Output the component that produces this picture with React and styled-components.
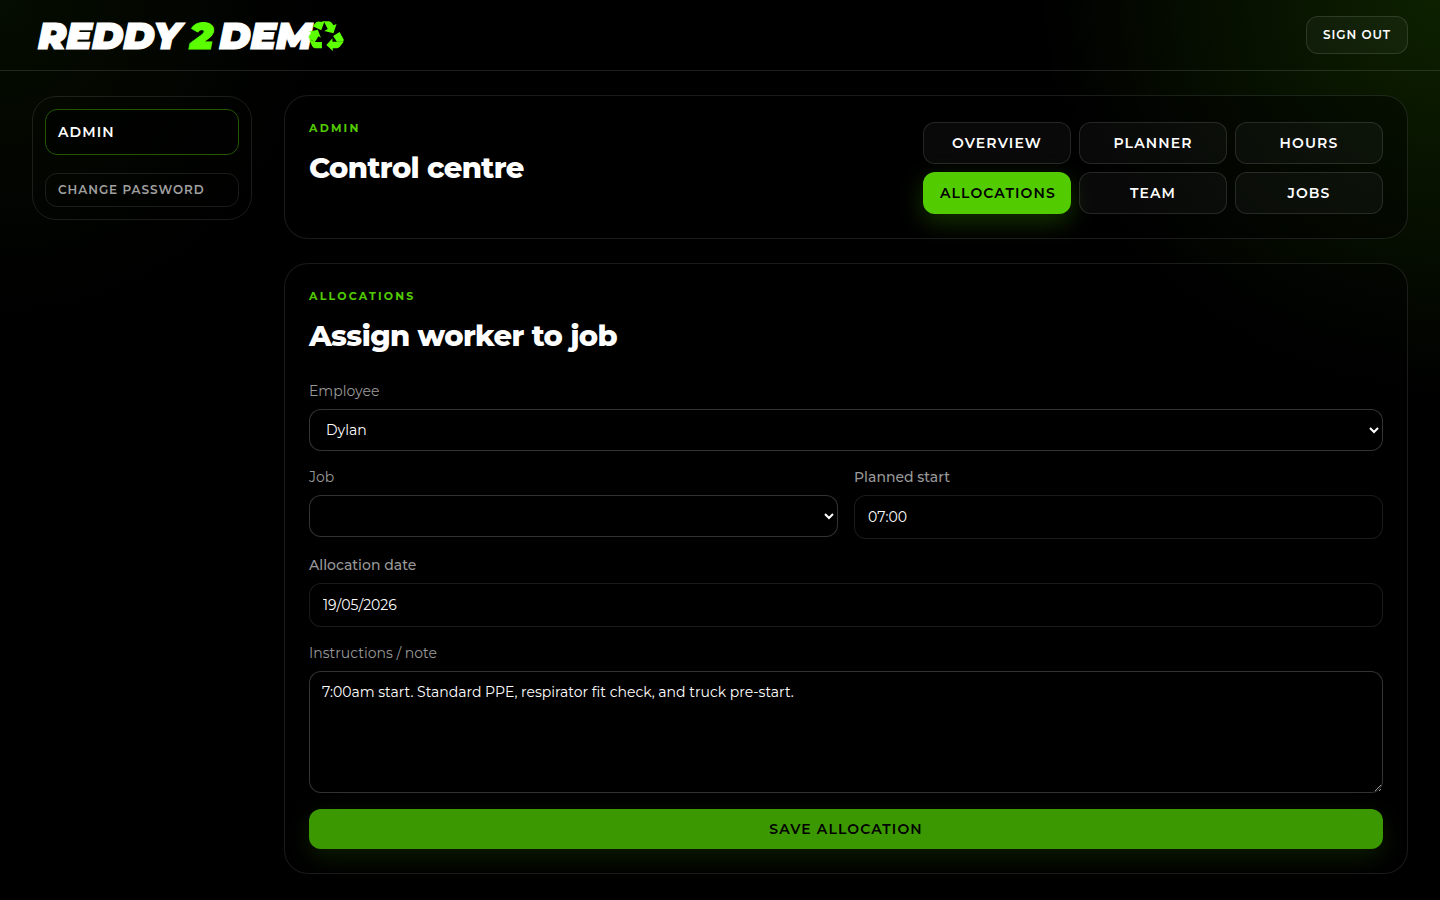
import React, { useState } from "react";
import styled, { createGlobalStyle } from "styled-components";

const GlobalStyle = createGlobalStyle`
  *, *::before, *::after { box-sizing: border-box; }
  body {
    margin: 0;
    min-height: 100vh;
    color: #fff;
    color-scheme: dark;
    font-family: Montserrat, Inter, "Liberation Sans", sans-serif;
    font-size: 14px;
    background:
      radial-gradient(circle at 100% 0, rgba(82, 204, 0, 0.16), transparent 400px),
      radial-gradient(circle at 0 0, rgba(82, 204, 0, 0.06), transparent 320px),
      #000;
  }
  button, input, select, textarea { font: inherit; color: inherit; }
  button { cursor: pointer; }
`;

const Header = styled.header`
  display: flex;
  align-items: center;
  justify-content: space-between;
  height: 71px;
  padding: 0 32px;
  border-bottom: 1px solid rgba(255, 255, 255, 0.12);
`;

const Logo = styled.a`
  display: flex;
  align-items: center;
  padding: 2px 0 0 6px;
  color: #fff;
  text-decoration: none;
  font-size: 38px;
  font-weight: 900;
  font-style: italic;
  line-height: 40px;
  -webkit-text-stroke: 1px currentColor;
`;

const LogoAccent = styled.span`
  margin: 0 6px 0 9px;
  color: #5bff00;
`;

const LogoIcon = styled.svg`
  width: 36px;
  height: 30px;
  margin-left: -4px;
  fill: #5bff00;
`;

const Button = styled.button`
  height: ${(p) => p.$height || 42}px;
  padding: 0 16px;
  border: 1px solid ${(p) => (p.$primary ? "transparent" : "rgba(255, 255, 255, 0.12)")};
  border-radius: 12px;
  background: ${(p) => (p.$primary ? "#52cc00" : "rgba(255, 255, 255, 0.035)")};
  box-shadow: ${(p) => (p.$primary ? "0 8px 24px rgba(82, 204, 0, 0.25)" : "none")};
  color: ${(p) => (p.$primary ? "#000" : "#fff")};
  font-size: ${(p) => (p.$small ? 12 : 14)}px;
  font-weight: 600;
  letter-spacing: 0.08em;
  line-height: ${(p) => (p.$small ? 16 : 20)}px;
  text-transform: uppercase;
`;

const SaveButton = styled.button`
  height: 40px;
  border: 0;
  border-radius: 12px;
  background: #3c9800;
  box-shadow: 0 8px 24px rgba(82, 204, 0, 0.14);
  color: #000;
  font-weight: 600;
  letter-spacing: 0.08em;
  text-transform: uppercase;
`;

const Layout = styled.div`
  display: grid;
  grid-template-columns: 220px minmax(0, 1fr);
  align-items: start;
  gap: 32px;
  padding: 24px 32px;
`;

const Sidebar = styled.nav`
  position: sticky;
  top: 96px;
  display: flex;
  flex-direction: column;
  gap: 18px;
  padding: 12px;
  border: 1px solid rgba(255, 255, 255, 0.1);
  border-radius: 24px;
`;

const SideLink = styled.a`
  display: flex;
  align-items: center;
  height: ${(p) => (p.$active ? 46 : 34)}px;
  padding: 0 12px;
  border: 1px solid ${(p) => (p.$active ? "#235700" : "rgba(255, 255, 255, 0.1)")};
  border-radius: 12px;
  background: ${(p) => (p.$active ? "rgba(0, 0, 0, 0.5)" : "transparent")};
  color: ${(p) => (p.$active ? "#fff" : "#a0a0a0")};
  font-size: ${(p) => (p.$active ? 14 : 12)}px;
  font-weight: 600;
  letter-spacing: 0.08em;
  line-height: ${(p) => (p.$active ? 20 : 16)}px;
  text-decoration: none;
  text-transform: uppercase;
`;

const Content = styled.main`
  display: flex;
  flex-direction: column;
  gap: 24px;
`;

const Card = styled.section`
  padding: 24px;
  border: 1px solid rgba(255, 255, 255, 0.1);
  border-radius: 24px;
  background: rgba(0, 0, 0, 0.4);
`;

const HeroRow = styled.div`
  display: flex;
  justify-content: space-between;
  gap: 24px;
  min-height: 94px;
`;

const Tabs = styled.nav`
  display: grid;
  grid-template-columns: repeat(3, 148px);
  align-self: flex-end;
  gap: 8px;
`;

const Eyebrow = styled.p`
  margin: 0 0 12px;
  color: #52cc00;
  font-size: 11px;
  font-weight: 700;
  letter-spacing: 0.2em;
  line-height: 16px;
  text-transform: uppercase;
`;

const Title = styled.h1`
  margin: 0;
  font-size: 29px;
  font-weight: 800;
  letter-spacing: -0.02em;
  line-height: 39px;
`;

const Form = styled.form`
  display: grid;
  gap: 16px;
  margin-top: 26px;
`;

const Columns = styled.div`
  display: grid;
  grid-template-columns: repeat(2, minmax(0, 1fr));
  align-items: start;
  gap: 16px;
`;

const Field = styled.label`
  display: grid;
  gap: 8px;
  color: #999;
  font-weight: ${(p) => (p.$strong ? 500 : 400)};
  line-height: 20px;
`;

const Select = styled.select`
  width: 100%;
  height: 42px;
  padding: 0 0 0 12px;
  border: 1px solid rgba(255, 255, 255, 0.2);
  border-radius: 12px;
  background: #000;
  color: #fff;
`;

const Input = styled.input`
  width: 100%;
  height: 44px;
  padding: 0 13px;
  border: 1px solid rgba(255, 255, 255, 0.1);
  border-radius: 12px;
  background: #000;
  color: #fff;
  font-weight: 400;
  font-kerning: none;
`;

const TextArea = styled.textarea`
  display: block;
  width: 100%;
  height: 122px;
  padding: 10px 12px;
  border: 1px solid rgba(255, 255, 255, 0.2);
  border-radius: 12px;
  background: #000;
  color: #fff;
  resize: vertical;
`;

const TABS = ["Overview", "Planner", "Hours", "Allocations", "Team", "Jobs"];

function RecycleMark() {
  return (
    <LogoIcon viewBox="18 18 106 90" preserveAspectRatio="none" aria-hidden="true">
      <path d="M32 34 42 22Q46 19 52 20L66 21 57 46Z" />
      <path d="M57 19H80Q86 20 89 25L93 31 102 27 93 55 66 48 76 42 66 22Z" />
      <path d="M25 52 20 50 47 44 56 68 49 64 38 82 21 70Q18 66 21 62L27 54Z" />
      <path d="M21 72 39 81H59V100H38Q33 99 30 93Z" />
      <path d="M92 63 111 51 122 71Q125 76 121 80L103 80Z" />
      <path d="M123 80 111 96Q108 99 103 100H91V108L72 90 90 70V80H103Z" />
    </LogoIcon>
  );
}

export default function App() {
  const [tab, setTab] = useState("Allocations");
  return (
    <>
      <GlobalStyle />
      <Header>
        <Logo href="#" aria-label="Reddy 2 Demo">
          <span>REDDY</span>
          <LogoAccent>2</LogoAccent>
          <span>DEM</span>
          <RecycleMark />
        </Logo>
        <Button type="button" $height={38} $small>Sign out</Button>
      </Header>
      <Layout>
        <Sidebar>
          <SideLink href="#" $active>Admin</SideLink>
          <SideLink href="#">Change password</SideLink>
        </Sidebar>
        <Content>
          <Card>
            <HeroRow>
              <div>
                <Eyebrow>Admin</Eyebrow>
                <Title>Control centre</Title>
              </div>
              <Tabs>
                {TABS.map((name) => (
                  <Button key={name} type="button" $primary={name === tab} onClick={() => setTab(name)}>
                    {name}
                  </Button>
                ))}
              </Tabs>
            </HeroRow>
          </Card>
          <Card>
            <Eyebrow>Allocations</Eyebrow>
            <Title as="h2">Assign worker to job</Title>
            <Form onSubmit={(e) => e.preventDefault()}>
              <Field>
                Employee
                <Select defaultValue="Dylan">
                  <option>Dylan</option>
                </Select>
              </Field>
              <Columns>
                <Field>
                  Job
                  <Select />
                </Field>
                <Field $strong>
                  Planned start
                  <Input defaultValue="07:00" />
                </Field>
              </Columns>
              <Field $strong>
                Allocation date
                <Input defaultValue="19/05/2026" />
              </Field>
              <Field>
                Instructions / note
                <TextArea defaultValue="7:00am start. Standard PPE, respirator fit check, and truck pre-start." />
              </Field>
              <SaveButton type="submit">Save allocation</SaveButton>
            </Form>
          </Card>
        </Content>
      </Layout>
    </>
  );
}
